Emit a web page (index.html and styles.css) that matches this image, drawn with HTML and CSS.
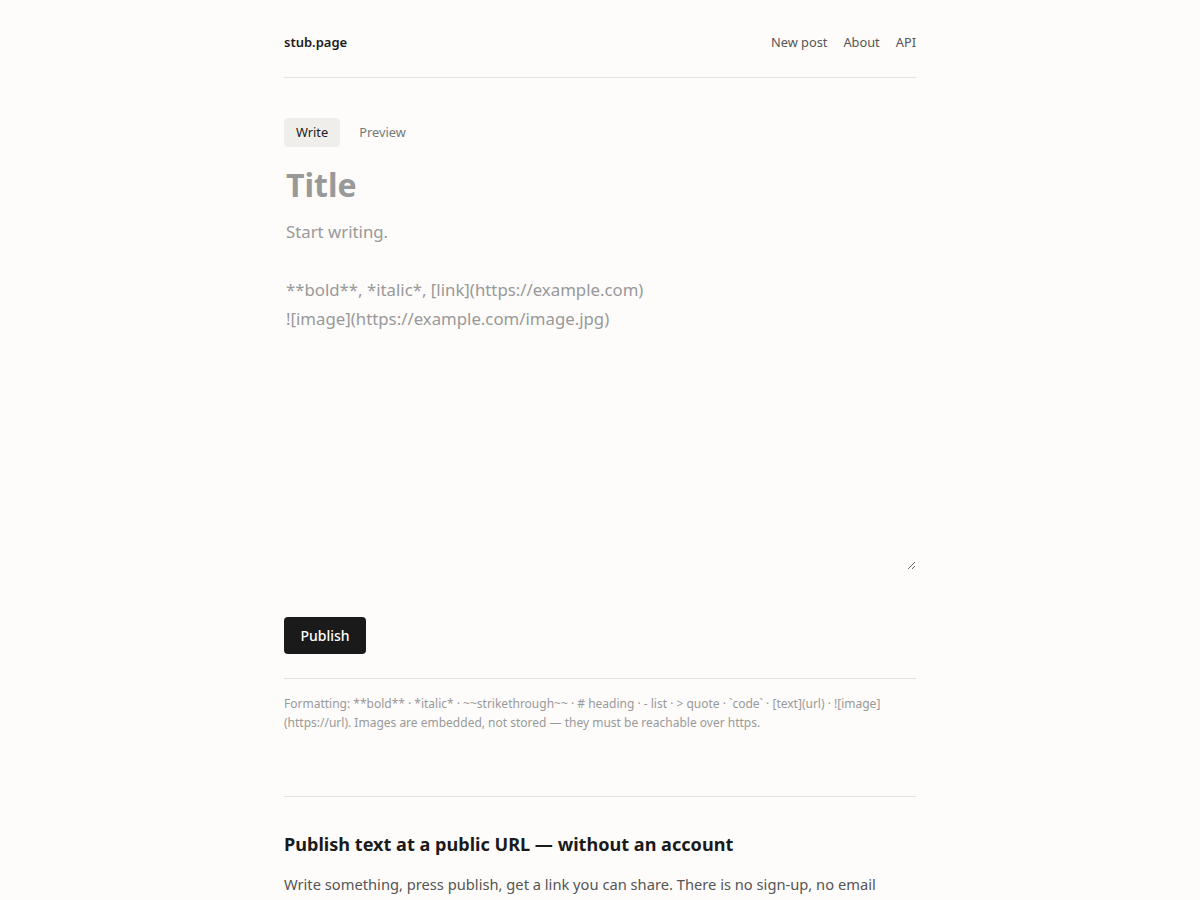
FILE: index.html
```html
<!DOCTYPE html>
<html lang="en">
<head>
<meta charset="utf-8">
<title>stub.page</title>
<link rel="stylesheet" href="styles.css">
</head>
<body>
<div class="wrap">
  <header class="site-header">
    <a class="brand" href="#">stub.page</a>
    <nav class="nav">
      <a href="#">New post</a>
      <a href="#">About</a>
      <a href="#">API</a>
    </nav>
  </header>

  <main class="editor">
    <div class="tabs">
      <button class="tab active">Write</button>
      <button class="tab">Preview</button>
    </div>
    <input class="title-input" type="text" placeholder="Title">
    <textarea class="body-input" placeholder="Start writing.

**bold**, *italic*, [link](https://example.com)
![image](https://example.com/image.jpg)"></textarea>
    <div class="actions">
      <button class="publish">Publish</button>
    </div>
    <p class="hint">Formatting: **bold** · *italic* · ~~strikethrough~~ · # heading · - list · &gt; quote · `code` · [text](url) · ![image](https://url). Images are embedded, not stored — they must be reachable over https.</p>
  </main>

  <section class="about">
    <h2>Publish text at a public URL — without an account</h2>
    <p>Write something, press publish, get a link you can share. There is no sign-up, no email address, no tracking. Each post gets a secret edit link so you can change or delete it later.</p>
  </section>
</div>
</body>
</html>
```

FILE: styles.css
```css
html, body {
  margin: 0;
  padding: 0;
  background: #fdfcfa;
}
body {
  font-family: "Noto Sans", "DejaVu Sans", sans-serif;
  color: #1a1a1a;
}
.wrap {
  width: 632px;
  margin: 0 auto;
}
.site-header {
  display: flex;
  justify-content: space-between;
  align-items: center;
  height: 78px;
  padding-top: 6px;
  box-sizing: border-box;
  border-bottom: 1px solid #e4e2de;
}
.brand {
  font-size: 13px;
  font-weight: 600;
  color: #1a1a1a;
  text-decoration: none;
}
.nav {
  display: flex;
  gap: 16px;
}
.nav a {
  font-size: 12.8px;
  color: #555;
  text-decoration: none;
}
.editor {
  padding-top: 40px;
}
.tabs {
  display: flex;
  gap: 7px;
  margin-bottom: 14px;
}
.tab {
  font-family: inherit;
  font-size: 12.8px;
  color: #777;
  background: transparent;
  border: 0;
  border-radius: 4px;
  padding: 0 12px 1px;
  height: 29px;
  cursor: pointer;
}
.tab.active {
  background: #f0eeea;
  color: #1a1a1a;
}
.title-input {
  display: block;
  width: 100%;
  box-sizing: border-box;
  font-family: inherit;
  font-size: 32px;
  font-weight: 700;
  color: #1a1a1a;
  background: transparent;
  border: 0;
  outline: none;
  padding: 2px 2px;
  height: 46px;
}
.title-input::placeholder { color: #999; }
.body-input {
  display: block;
  width: 100%;
  box-sizing: border-box;
  font-family: inherit;
  font-size: 16.8px;
  line-height: 29px;
  color: #1a1a1a;
  background: transparent;
  border: 0;
  outline: none;
  padding: 2px;
  margin-top: 8px;
  height: 355px;
  resize: vertical;
}
.body-input::placeholder { color: #999; }
.actions {
  padding-top: 47px;
}
.publish {
  font-family: inherit;
  font-size: 14px;
  font-weight: 500;
  color: #fff;
  background: #1a1a1a;
  border: 0;
  border-radius: 4px;
  height: 37px;
  padding: 0 16.5px;
  cursor: pointer;
}
.hint {
  margin: 24px 0 0;
  padding-top: 15px;
  border-top: 1px solid #e4e2de;
  font-size: 12px;
  line-height: 19px;
  color: #999;
}
.about {
  margin-top: 64px;
  border-top: 1px solid #e4e2de;
  padding-top: 35px;
}
.about h2 {
  margin: 0 0 16px;
  font-size: 18.1px;
  font-weight: 700;
  color: #1a1a1a;
}
.about p {
  margin: 0;
  font-size: 14.7px;
  line-height: 1.7;
  color: #555;
}
```
